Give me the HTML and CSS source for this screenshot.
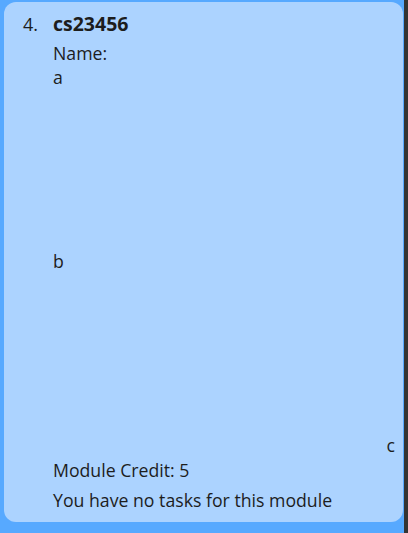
FILE: index.html
```html
<!DOCTYPE html>
<html>
<head>
<meta charset="utf-8">
<link rel="stylesheet" href="styles.css">
</head>
<body>
<div class="page">
  <div class="card">
    <div class="index">4.</div>
    <div class="content">
      <div class="code">cs23456</div>
      <div class="line name">Name:</div>
      <div class="line block">a</div>
      <div class="line block">b</div>
      <div class="line right">c</div>
      <div class="line credit">Module Credit: 5</div>
      <div class="line tasks">You have no tasks for this module</div>
    </div>
  </div>
  <div class="scrollbar"></div>
</div>
</body>
</html>
```
FILE: styles.css
```css
html, body {
  margin: 0;
  padding: 0;
}
body {
  width: 408px;
  height: 533px;
  background: #57a9ff;
  font-family: "Open Sans", "Noto Sans", sans-serif;
  color: #1d1d1d;
  overflow: hidden;
}
.page {
  display: flex;
  height: 533px;
}
.card {
  margin: 2px 0 0 4px;
  width: 399px;
  height: 520px;
  background: #acd3ff;
  border-radius: 12px;
  display: grid;
  grid-template-columns: 30px 1fr;
  box-sizing: border-box;
  padding: 7px 8px 0 19px;
}
.scrollbar {
  margin-left: 1px;
  width: 4px;
  background: #343434;
}
.index {
  font-size: 18px;
  line-height: 30px;
}
.content {
  display: flex;
  flex-direction: column;
}
.code {
  font-weight: bold;
  font-size: 19.5px;
  line-height: 30px;
}
.line {
  font-size: 17.7px;
  line-height: 24px;
}
.name { margin-top: 2px; }
.block { height: 184px; }
.right { text-align: right; }
.credit { margin-top: 1px; }
.tasks { margin-top: 6px; }
```
